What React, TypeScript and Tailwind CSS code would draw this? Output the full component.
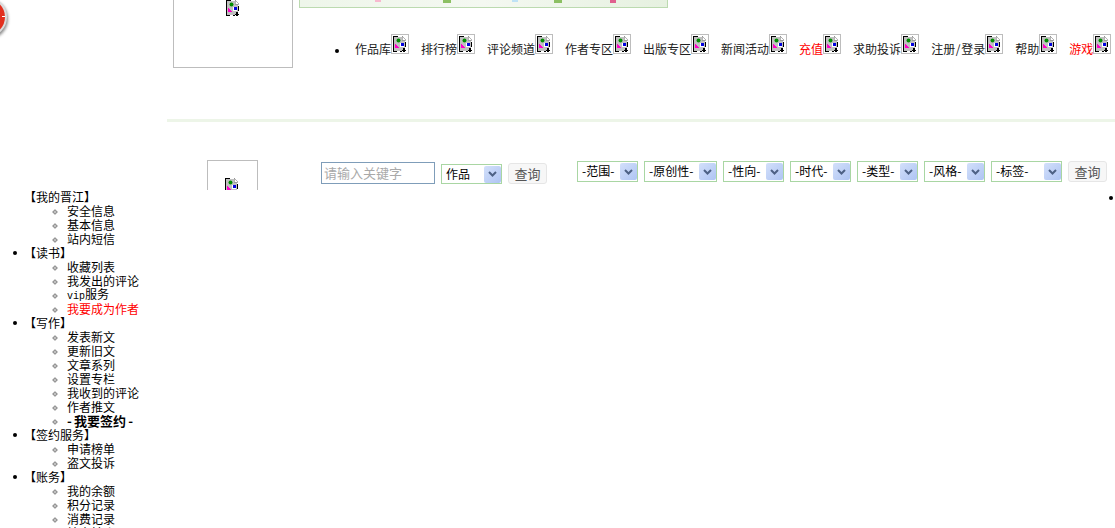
import React from "react";

function Broken() {
  return (
    <svg width="14" height="16" viewBox="0 0 14 16" shapeRendering="crispEdges" className="block shrink-0">
      <path d="M1 1H9L12 4V15H1Z" fill="#c0c0c0" />
      <path d="M9 0L13 4H9Z" fill="#ffffff" stroke="#808080" strokeWidth="0.6" />
      <path d="M0 0H5V1H1V15H4V16H0Z" fill="#000000" />
      <path d="M12 6H13V11H12ZM7 15H9V16H7Z" fill="#000000" />
      <circle cx="5.5" cy="4.5" r="2" fill="#008f00" shapeRendering="auto" />
      <path d="M2 8L7 12H2Z" fill="#ff00c8" />
      <path d="M7 7H11V11H7Z" fill="#ffffff" />
      <path d="M8 7H11V10H8Z" fill="#0000e0" />
      <path d="M10 12H12V14H13V15H12V16H10V15H9V14H10Z" fill="#000000" />
    </svg>
  );
}

function NavItem({ label, red }: { label: React.ReactNode; red?: boolean }) {
  return (
    <li className="flex items-end">
      <span className={red ? "text-[#ff0000] leading-[14px] -mb-[2px]" : "text-[#222222] leading-[14px] -mb-[2px]"}>{label}</span>
      <span className="w-[18px] h-5 border border-[#bdbdbd] flex items-center justify-center shrink-0">
        <Broken />
      </span>
    </li>
  );
}

function Pick({ label, w, h }: { label: string; w: string; h: string }) {
  return (
    <div className={`${w} ${h} border border-[#a9d6a3] flex items-center justify-between bg-white pl-1`}>
      <span className="text-[12px] text-black leading-none pb-px">{label}</span>
      <span className="w-[17px] h-[17px] rounded-[2px] bg-gradient-to-br from-[#d3e0fa] to-[#aec4f3] flex items-center justify-center">
        <svg width="9" height="6" viewBox="0 0 9 6">
          <path d="M1 1L4.5 4.5L8 1" fill="none" stroke="#4d6185" strokeWidth="2" />
        </svg>
      </span>
    </div>
  );
}

function QueryButton() {
  return (
    <button className="w-[39px] h-[21px] rounded-[3px] border border-[#e6e6e6] bg-[#f7f7f7] text-[13px] leading-none text-[#555555] pb-px">
      查询
    </button>
  );
}

type Sub = { t: React.ReactNode; red?: boolean };
const tree: { title: string; bullet: boolean; subs: Sub[] }[] = [
  { title: "【我的晋江】", bullet: false, subs: [{ t: "安全信息" }, { t: "基本信息" }, { t: "站内短信" }] },
  {
    title: "【读书】",
    bullet: true,
    subs: [
      { t: "收藏列表" },
      { t: "我发出的评论" },
      { t: <><span className="font-['Liberation_Mono',monospace] text-[10px]">vip</span>服务</> },
      { t: "我要成为作者", red: true },
    ],
  },
  {
    title: "【写作】",
    bullet: true,
    subs: [
      { t: "发表新文" },
      { t: "更新旧文" },
      { t: "文章系列" },
      { t: "设置专栏" },
      { t: "我收到的评论" },
      { t: "作者推文" },
      {
        t: (
          <span className="flex items-center font-bold text-[13px]">
            <span className="w-[7px]">-</span>我要签约<span className="w-[7px] text-right">-</span>
          </span>
        ),
      },
    ],
  },
  { title: "【签约服务】", bullet: true, subs: [{ t: "申请榜单" }, { t: "盗文投诉" }] },
  { title: "【账务】", bullet: true, subs: [{ t: "我的余额" }, { t: "积分记录" }, { t: "消费记录" }, { t: "站内转账" }] },
];

export default function App() {
  return (
    <div className="relative w-[1115px] h-[528px] overflow-hidden bg-white font-['Noto_Sans_CJK_SC',sans-serif] text-[12px] text-black">
      <div className="absolute -left-[33px] -top-[3px] w-10 h-10 rounded-full bg-[#e2301f] border-2 border-[#dcdcdc] shadow-[1px_2px_3px_rgba(0,0,0,0.45)]">
        <span className="absolute right-0 top-[17px] w-[3px] h-px bg-white" />
      </div>

      <header className="h-[190px] overflow-hidden">
        <div className="h-[119px] flex pl-[173px]">
          <div className="w-[120px] h-[68px] border border-[#bdbdbd] border-t-0 flex justify-center shrink-0">
            <Broken />
          </div>
          <div className="ml-1.5">
            <div className="w-[369px] h-2 border border-t-0 border-[#bcdab0] bg-gradient-to-r from-[#eef6ea] via-[#f4f8f1] to-[#e6f1e0]">
              <svg width="367" height="3" className="block">
                <rect x="75" y="0" width="6" height="2" fill="#f8b9cf" />
                <rect x="143" y="0" width="8" height="3" fill="#8cc063" />
                <rect x="212" y="0" width="6" height="2" fill="#bfe2f5" />
                <rect x="254" y="0" width="8" height="3" fill="#8cc063" />
                <rect x="310" y="0" width="6" height="3" fill="#e0608f" />
              </svg>
            </div>
            <div className="mt-[26px] ml-9 flex items-end">
              <span className="w-1 h-1 rounded-full bg-black mb-px mr-4 shrink-0" />
              <ul className="flex gap-3">
                <NavItem label="作品库" />
                <NavItem label="排行榜" />
                <NavItem label="评论频道" />
                <NavItem label="作者专区" />
                <NavItem label="出版专区" />
                <NavItem label="新闻活动" />
                <NavItem label="充值" red />
                <NavItem label="求助投诉" />
                <NavItem label={<>注册<span className="inline-block w-1.5 text-center">/</span>登录</>} />
                <NavItem label="帮助" />
                <NavItem label="游戏" red />
              </ul>
            </div>
          </div>
        </div>
        <div className="ml-[167px] h-[3px] bg-[#edf5e8]" />
        <div className="mt-[38px] pl-[207px] flex items-start">
          <div className="w-[51px] h-10 border border-[#bdbdbd] flex justify-center pt-[17px] pr-[2px] shrink-0">
            <Broken />
          </div>
          <input
            placeholder="请输入关键字"
            className="ml-[63px] mt-0.5 w-[114px] h-[22px] border border-[#7f9db9] px-0.5 pb-px text-[13px] outline-none placeholder:text-[#a9a9a9]"
          />
          <div className="ml-1.5 mt-1">
            <Pick label="作品" w="w-[61px]" h="h-5" />
          </div>
          <div className="ml-1.5 mt-[3px]">
            <QueryButton />
          </div>
          <div className="ml-[30px] mt-px flex items-start gap-1.5">
            <Pick label="-范围-" w="w-[61px]" h="h-[21px]" />
            <Pick label="-原创性-" w="w-[73px]" h="h-[21px]" />
            <Pick label="-性向-" w="w-[61px]" h="h-[21px]" />
            <Pick label="-时代-" w="w-[61px]" h="h-[21px]" />
            <Pick label="-类型-" w="w-[61px]" h="h-[21px]" />
            <Pick label="-风格-" w="w-[61px]" h="h-[21px]" />
            <Pick label="-标签-" w="w-[71px]" h="h-[21px]" />
            <QueryButton />
          </div>
        </div>
      </header>

      <main className="flex justify-between items-start">
        <ul className="leading-[14px]">
          {tree.map((g) => (
            <li key={g.title}>
              <div className="flex items-center h-3.5 pl-[13px]">
                <span className={g.bullet ? "w-1 h-1 rounded-full bg-black" : "w-1 h-1"} />
                <span className="ml-[7px]">{g.title}</span>
              </div>
              <ul>
                {g.subs.map((s, i) => (
                  <li key={i} className="flex items-center h-3.5 pl-[53px]">
                    <span className="w-1 h-1 mt-px rotate-45 border border-[#8f8f8f] bg-[#c8c8c8]" />
                    <span className={s.red ? "ml-2.5 text-[#ff0000]" : "ml-2.5"}>{s.t}</span>
                  </li>
                ))}
              </ul>
            </li>
          ))}
        </ul>
        <span className="w-1 h-1 rounded-full bg-black mt-1.5 mr-[2px]" />
      </main>
    </div>
  );
}
